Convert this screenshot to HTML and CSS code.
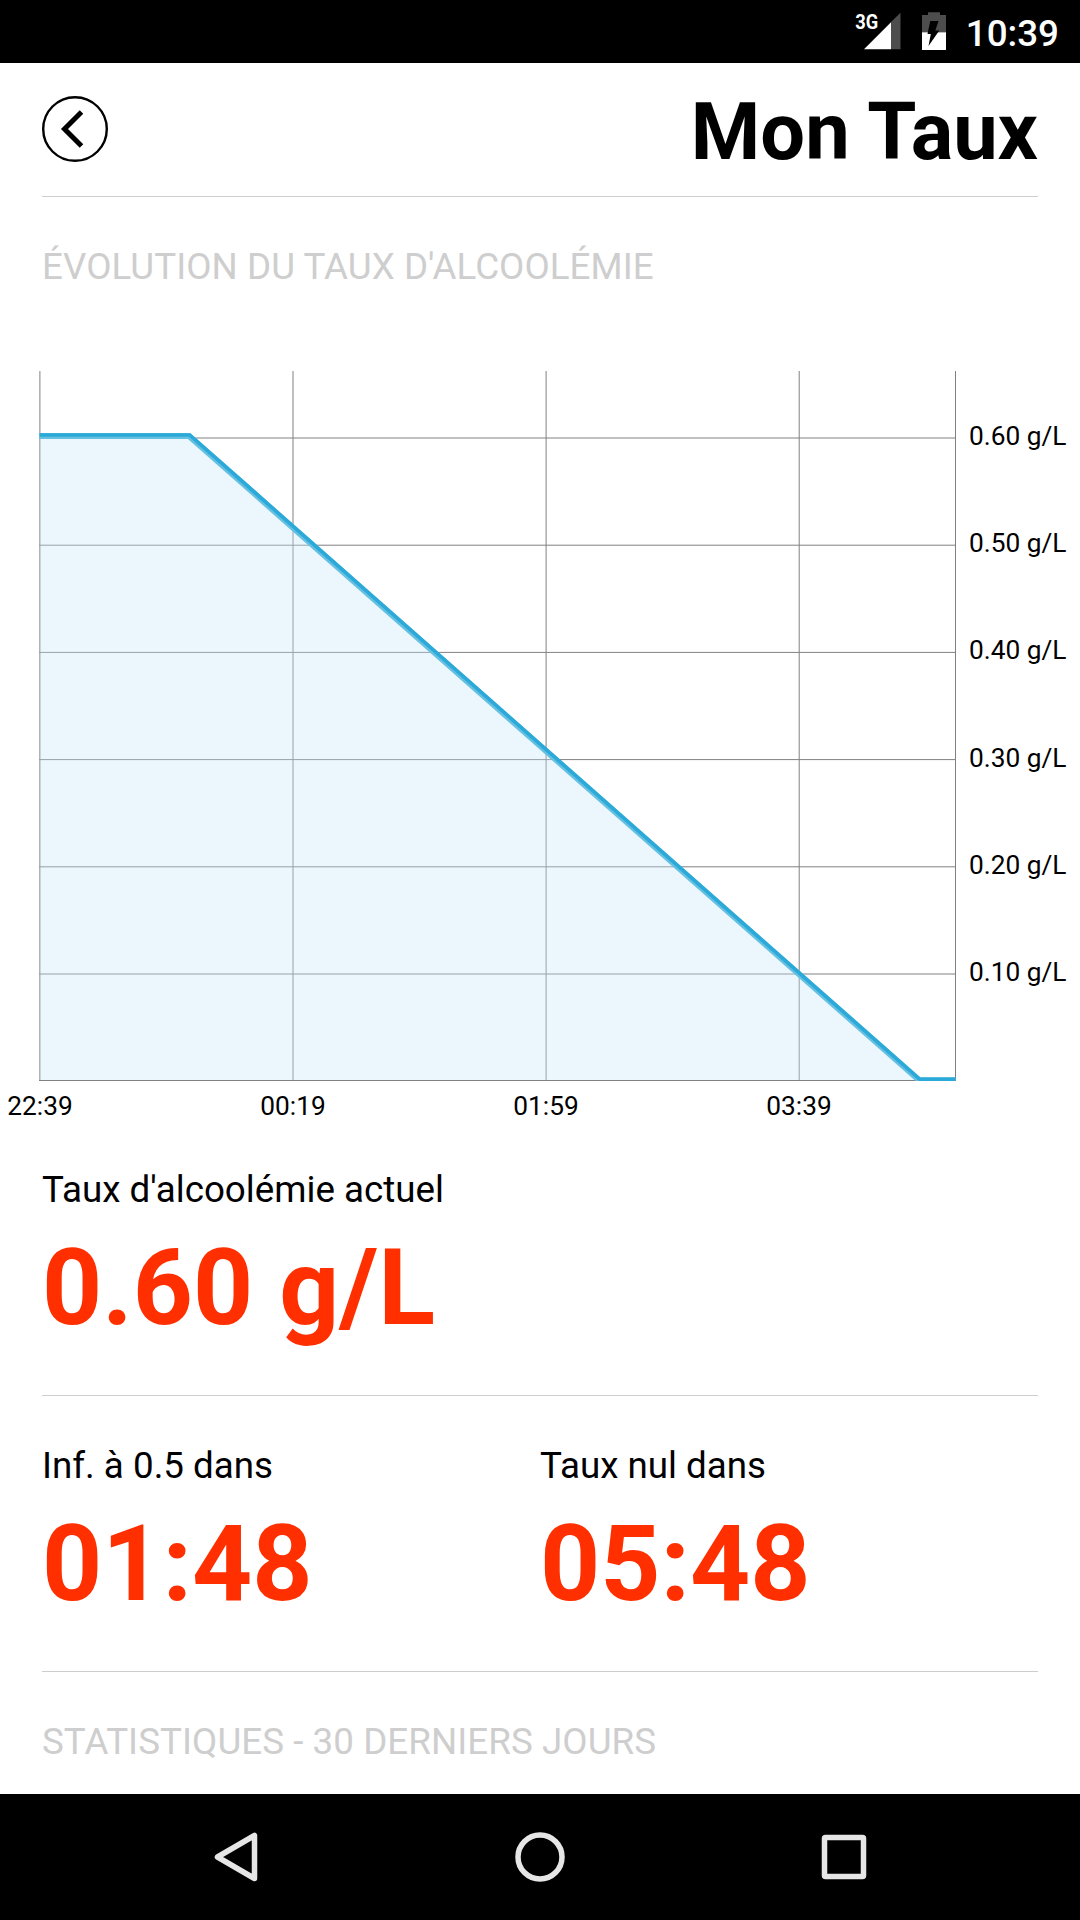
FILE: index.html
```html
<!DOCTYPE html>
<html lang="fr">
<head>
<meta charset="utf-8">
<title>Mon Taux</title>
<link rel="stylesheet" href="styles.css">
</head>
<body>
<div class="status-bar">
  <svg class="status-icons" width="100" height="63" viewBox="850 0 100 63">
    <text class="network" transform="translate(855.2 28.7) scale(.87 1)">3G</text>
    <path fill="#4d4d4d" d="M891 22V49.3H900.5V12.8z"/>
    <path fill="#fff" d="M864 49.3H891V22.3z"/>
    <path fill="#4d4d4d" d="M922 15H928V12.3H940V15H946V32.5H922z"/>
    <path fill="#fff" d="M922 32.3H946V50H922z"/>
    <path fill="#000" d="M930.3 21H938.5L935.3 30.5H939.3L928.5 46L930.8 34H927.5z"/>
  </svg>
  <span class="clock">10:39</span>
</div>
<main class="page">
  <header class="header">
    <svg class="back" width="66" height="66" viewBox="0 0 66 66">
      <circle cx="33" cy="33" r="31.8"/>
      <path d="M39.5 16L22.5 33L39.5 50"/>
    </svg>
    <h1 class="title">Mon Taux</h1>
  </header>
  <h2 class="section-title">ÉVOLUTION DU TAUX D'ALCOOLÉMIE</h2>
  <svg class="chart" width="1080" height="770" viewBox="0 360 1080 770">
    <defs><clipPath id="plot"><path d="M39.5 371H955.5V1081H39.5z"/></clipPath></defs>
    <g class="grid">
      <path d="M39.9 371V1081M293 371V1081M546.1 371V1081M799.2 371V1081M955.5 371V1081"/>
      <path d="M39.5 438H955M39.5 545.2H955M39.5 652.4H955M39.5 759.6H955M39.5 866.8H955M39.5 974H955M39 1080.5H956"/>
    </g>
    <g clip-path="url(#plot)">
      <path class="area" d="M40 436H189L919 1080H40z"/>
      <path class="line-soft" d="M39 436H189L919 1080H956"/>
      <path class="line" d="M39 435H189.7L920 1079.5H956"/>
    </g>
    <g class="labels-y">
      <text x="969" y="445">0.60 g/L</text>
      <text x="969" y="552">0.50 g/L</text>
      <text x="969" y="659">0.40 g/L</text>
      <text x="969" y="767">0.30 g/L</text>
      <text x="969" y="874">0.20 g/L</text>
      <text x="969" y="981">0.10 g/L</text>
    </g>
    <g class="labels-x">
      <text x="40" y="1115">22:39</text>
      <text x="293" y="1115">00:19</text>
      <text x="546" y="1115">01:59</text>
      <text x="799" y="1115">03:39</text>
    </g>
  </svg>
  <section class="stats current">
    <div class="stat"><div class="label">Taux d'alcoolémie actuel</div><div class="value">0.60 g/L</div></div>
  </section>
  <section class="stats">
    <div class="stat"><div class="label">Inf. à 0.5 dans</div><div class="value">01:48</div></div>
    <div class="stat"><div class="label">Taux nul dans</div><div class="value">05:48</div></div>
  </section>
  <h2 class="section-title">STATISTIQUES - 30 DERNIERS JOURS</h2>
</main>
<nav class="nav-bar">
  <svg width="50" height="50" viewBox="0 0 50 50"><path d="M43.5 3.5V46.5L6.5 25z"/></svg>
  <svg width="50" height="50" viewBox="0 0 50 50"><circle cx="25" cy="25" r="22"/></svg>
  <svg width="50" height="50" viewBox="0 0 50 50"><rect x="5.5" y="5.5" width="39" height="39" rx="1"/></svg>
</nav>
</body>
</html>
```

FILE: styles.css
```css
body {
  margin: 0;
  width: 1080px;
  height: 1920px;
  overflow: hidden;
  display: flex;
  flex-direction: column;
  background: #fff;
  color: #000;
  font-family: Roboto, sans-serif;
}

.status-bar {
  flex: none;
  height: 63px;
  display: flex;
  justify-content: flex-end;
  align-items: center;
  gap: 16px;
  padding-right: 21px;
  box-sizing: border-box;
  background: #000;
  color: #fff;
}

.network {
  font-size: 21px;
  font-weight: 700;
  fill: #fff;
}

.clock {
  font-size: 36.75px;
  font-weight: 500;
  line-height: 44px;
  padding-top: 4px;
}

.page {
  flex: 1;
  min-height: 0;
  overflow: hidden;
}

.header {
  height: 133px;
  margin: 0 42px;
  display: flex;
  align-items: center;
  justify-content: space-between;
  border-bottom: 1px solid #cdcdcd;
}

.back {
  margin-bottom: 1px;
  fill: none;
  stroke: #000;
  stroke-width: 2.4;
}

.back path {
  stroke-width: 5;
}

.title {
  margin: 0;
  padding-top: 5px;
  font-size: 79.4px;
  line-height: 94px;
  font-weight: 700;
}

.section-title {
  margin: 48px 42px 0;
  font-size: 36.75px;
  line-height: 44px;
  letter-spacing: .05px;
  font-weight: 400;
  color: #cecece;
}

.chart {
  display: block;
  margin-top: 71px;
}

.grid {
  fill: none;
  stroke: #808080;
  stroke-width: 1;
}

.area {
  fill: rgba(195, 231, 249, .333);
}

.line-soft,
.line {
  fill: none;
  stroke: #66c0e1;
  stroke-width: 6;
}

.line {
  stroke: #2ba9d8;
  stroke-width: 3.6;
}

.labels-y,
.labels-x {
  font-size: 26.25px;
}

.labels-x {
  text-anchor: middle;
}

.stats {
  height: 276px;
  margin: 0 42px;
  padding-top: 48px;
  box-sizing: border-box;
  display: grid;
  grid-template-columns: 1fr 1fr;
  border-bottom: 1px solid #cdcdcd;
}

.current {
  height: 266px;
  padding-top: 38px;
}

.label {
  font-size: 36.75px;
  line-height: 44px;
}

.value {
  margin-top: 15px;
  font-size: 105px;
  line-height: 124px;
  font-weight: 700;
  color: #ff2f00;
}

.nav-bar {
  flex: none;
  height: 126px;
  display: flex;
  justify-content: center;
  gap: 254px;
  align-items: center;
  background: #000;
}

.nav-bar svg {
  fill: none;
  stroke: #e6e6e6;
  stroke-width: 5.5;
  stroke-linejoin: round;
}
```
